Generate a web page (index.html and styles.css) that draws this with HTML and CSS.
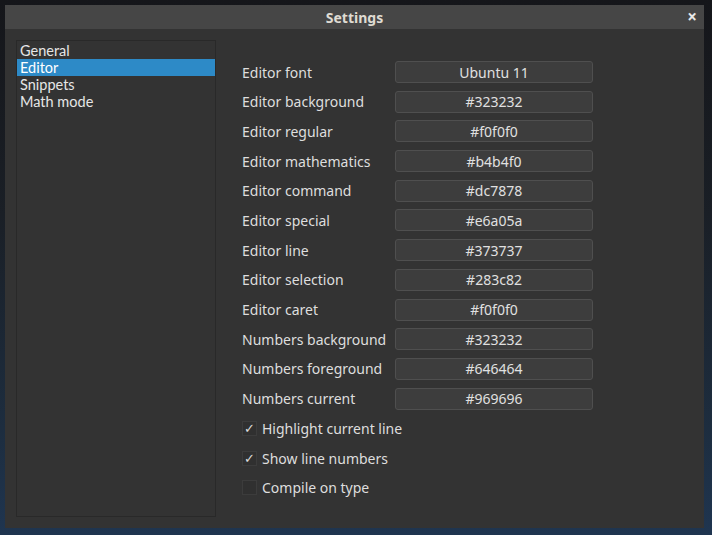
FILE: index.html
```html
<!DOCTYPE html>
<html>
<head>
<meta charset="utf-8">
<link rel="stylesheet" href="styles.css">
</head>
<body>
<div class="window">
  <div class="titlebar">
    <span class="title">Settings</span>
    <span class="close">×</span>
  </div>
  <div class="content">
    <ul class="list">
      <li>General</li>
      <li class="selected">Editor</li>
      <li>Snippets</li>
      <li>Math mode</li>
    </ul>
    <div class="form">
      <div class="grid">
        <span class="label">Editor font</span><button class="btn">Ubuntu 11</button>
        <span class="label">Editor background</span><button class="btn">#323232</button>
        <span class="label">Editor regular</span><button class="btn">#f0f0f0</button>
        <span class="label">Editor mathematics</span><button class="btn">#b4b4f0</button>
        <span class="label">Editor command</span><button class="btn">#dc7878</button>
        <span class="label">Editor special</span><button class="btn">#e6a05a</button>
        <span class="label">Editor line</span><button class="btn">#373737</button>
        <span class="label">Editor selection</span><button class="btn">#283c82</button>
        <span class="label">Editor caret</span><button class="btn">#f0f0f0</button>
        <span class="label">Numbers background</span><button class="btn">#323232</button>
        <span class="label">Numbers foreground</span><button class="btn">#646464</button>
        <span class="label">Numbers current</span><button class="btn">#969696</button>
      </div>
      <div class="checks">
        <label class="check"><span class="box">✓</span>Highlight current line</label>
        <label class="check"><span class="box">✓</span>Show line numbers</label>
        <label class="check"><span class="box"></span>Compile on type</label>
      </div>
    </div>
  </div>
</div>
</body>
</html>
```
FILE: styles.css
```css
html, body {
  margin: 0;
  padding: 0;
}
body {
  width: 712px;
  height: 535px;
  overflow: hidden;
  background: linear-gradient(180deg, #15161a 0%, #1a1f26 40%, #1d2d3f 80%, #1f3550 100%);
  font-family: "Noto Sans", "DejaVu Sans", sans-serif;
  font-size: 14px;
  color: #dedede;
}
.window {
  margin: 5px 0 0 5px;
  width: 699px;
  height: 523px;
  background: #333333;
  display: flex;
  flex-direction: column;
}
.titlebar {
  height: 24px;
  background: #464646;
  display: flex;
  align-items: center;
  justify-content: center;
  position: relative;
  flex: none;
}
.title {
  font-weight: bold;
  font-size: 14px;
  color: #dfdbd2;
}
.close {
  position: absolute;
  right: 7px;
  top: 0;
  line-height: 24px;
  font-size: 17px;
  font-weight: bold;
  color: #e8e8e8;
}
.content {
  flex: 1;
  display: flex;
  padding: 11px;
  gap: 26px;
}
.list {
  list-style: none;
  margin: 0;
  padding: 1px 0 0 0;
  width: 198px;
  border: 1px solid #292929;
  background: #333333;
  font-family: Lato, "Noto Sans", sans-serif;
  font-size: 14.5px;
}
.list li {
  height: 17px;
  line-height: 17px;
  padding-left: 3px;
  color: #e6e6e6;
}
.list li.selected {
  background: #2d8ac7;
  color: #ffffff;
}
.form {
  padding-top: 21px;
  display: flex;
  flex-direction: column;
}
.grid {
  display: grid;
  grid-template-columns: 153px 198px;
  row-gap: 7.7px;
  align-items: center;
}
.label {
  color: #dedede;
}
.btn {
  height: 22px;
  padding: 0;
  border: 1px solid #4f4f4f;
  border-radius: 3px;
  background: #3d3d3d;
  color: #e0e0e0;
  font-family: inherit;
  font-size: 14px;
}
.checks {
  margin-top: 9px;
  display: flex;
  flex-direction: column;
  gap: 9.5px;
}
.check {
  display: flex;
  align-items: center;
  height: 20px;
  color: #dedede;
}
.box {
  width: 13px;
  height: 13px;
  border: 1px solid #3c3c3c;
  background: #303030;
  margin-right: 5px;
  font-size: 13px;
  line-height: 13px;
  text-align: center;
  color: #dcdcdc;
}
```
